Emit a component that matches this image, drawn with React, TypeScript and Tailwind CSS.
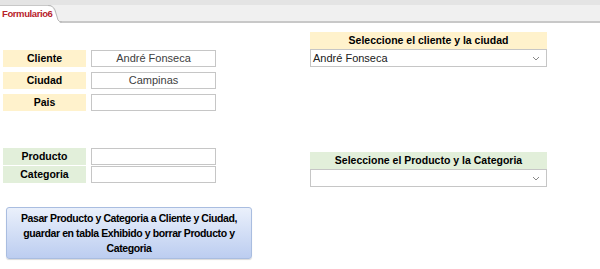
const Label = ({ text, green }: { text: string; green?: boolean }) => (
  <div
    className={`w-[83px] h-[17px] flex items-center justify-center font-bold text-[10.5px] text-black ${
      green ? "bg-[#e2efda]" : "bg-[#fff2cc]"
    }`}
  >
    {text}
  </div>
);

const Input = ({ value }: { value?: string }) => (
  <div className="w-[125px] h-[17px] border border-[#c6c6c6] bg-white flex items-center justify-center text-[11px] text-[#404040]">
    {value}
  </div>
);

const Combo = ({ value }: { value?: string }) => (
  <div className="w-[237px] h-[18px] border border-[#c6c6c6] bg-white flex items-center justify-between pl-[2px] pr-[6px] text-[11px] text-[#202020]">
    <span>{value}</span>
    <svg width="8" height="5" viewBox="0 0 8 5" fill="none">
      <path d="M1 1l3 3 3-3" stroke="#8a8a8a" strokeWidth="1" />
    </svg>
  </div>
);

export default function App() {
  return (
    <div
      className="w-[600px] h-[269px] bg-white overflow-hidden"
      style={{ fontFamily: '"Liberation Sans", Arial, sans-serif' }}
    >
      {/* Tab strip */}
      <div className="h-[23px] bg-[#f0f0f0] relative">
        <div className="h-[5px] bg-[#e4e4e4]" />
        <div className="absolute left-0 right-0 bottom-0 h-[2px] bg-[#c8c8c8]" />
        <div
          className="absolute left-0 top-[5px] h-[18px] w-[60px] bg-white border-t border-[#c8c8c8] flex items-center pl-[2px] text-[9.5px] tracking-[-0.4px] font-bold text-[#b8232b] z-10 whitespace-nowrap"
          style={{ clipPath: "polygon(0 0, 85% 0, 100% 100%, 0 100%)" }}
        >
          Formulario6
        </div>
        <svg className="absolute left-[48px] top-[5px] z-20" width="14" height="18" viewBox="0 0 14 18">
          <path d="M0 0.5 Q5 0.5 7 5 L10 15 Q11 17 14 17" stroke="#b8b8b8" strokeWidth="1" fill="none" />
        </svg>
      </div>

      <div className="flex">
        {/* Left column */}
        <div className="w-[310px] pl-[3px]">
          <div className="mt-[27px] flex flex-col gap-[5px]">
            <div className="flex gap-[5px]"><Label text="Cliente" /><Input value="André Fonseca" /></div>
            <div className="flex gap-[5px]"><Label text="Ciudad" /><Input value="Campinas" /></div>
            <div className="flex gap-[5px]"><Label text="Pais" /><Input /></div>
          </div>
          <div className="mt-[37px] flex flex-col gap-[1px]">
            <div className="flex gap-[5px]"><Label text="Producto" green /><Input /></div>
            <div className="flex gap-[5px]"><Label text="Categoria" green /><Input /></div>
          </div>
          <div className="mt-[24px] ml-[3px] w-[246px] h-[52px] rounded-[3px] border border-[#a9bde0] bg-gradient-to-b from-[#eaf0fb] to-[#bccdf0] shadow-[0_1px_1px_rgba(0,0,0,0.15)] flex flex-col items-center justify-center text-center text-[10.5px] tracking-[-0.4px] leading-[15px] font-bold text-black whitespace-nowrap">
            <span>Pasar Producto y Categoria a Cliente y Ciudad,</span>
            <span>guardar en tabla Exhibido y borrar Producto y</span>
            <span>Categoria</span>
          </div>
        </div>

        {/* Right column */}
        <div className="flex flex-col">
          <div className="mt-[9px] w-[237px] h-[17px] bg-[#fff2cc] flex items-center justify-center font-bold text-[10.5px]">
            Seleccione el cliente y la ciudad
          </div>
          <Combo value="André Fonseca" />
          <div className="mt-[85px] w-[237px] h-[17px] bg-[#e2efda] flex items-center justify-center font-bold text-[10.5px]">
            Seleccione el Producto y la Categoria
          </div>
          <Combo />
        </div>
      </div>
    </div>
  );
}
